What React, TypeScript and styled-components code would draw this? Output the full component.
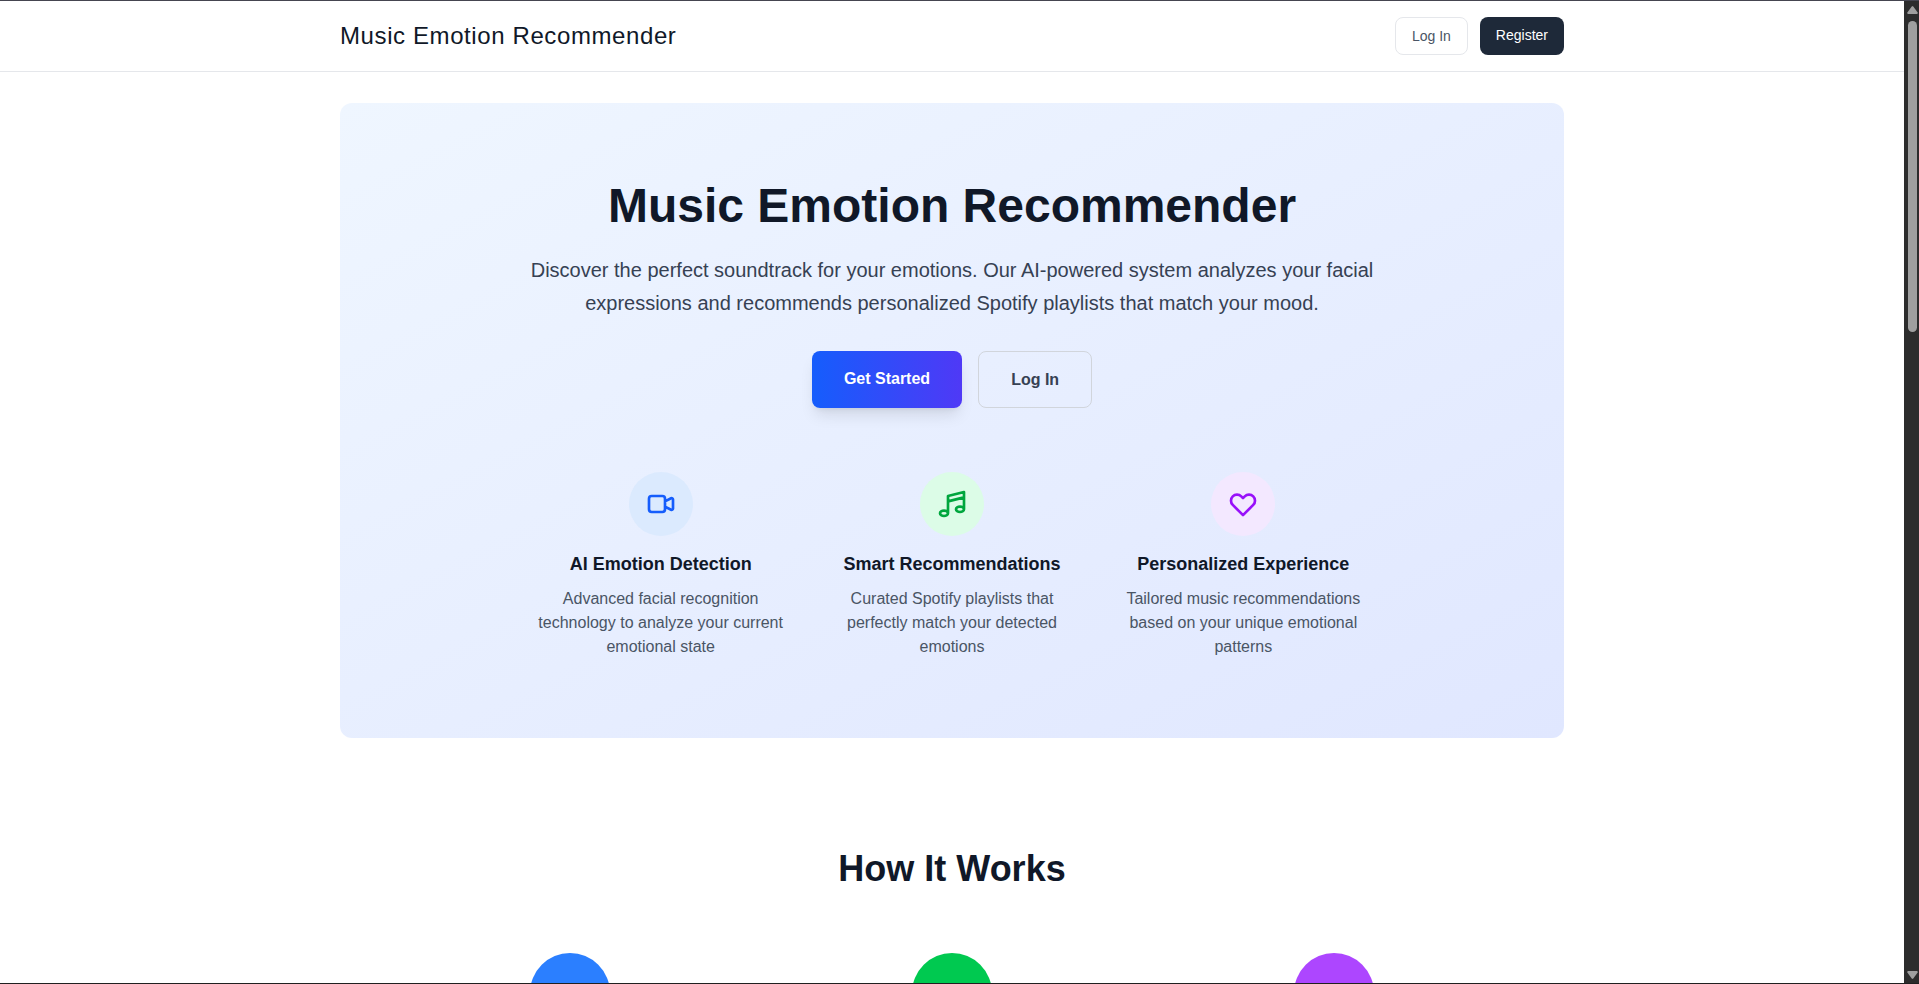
import React from "react";
import styled, { createGlobalStyle, css } from "styled-components";

const GlobalStyle = createGlobalStyle`
  *, *::before, *::after { box-sizing: border-box; }
  body {
    margin: 0;
    background: #ffffff;
    color: #101828;
    font-family: "Liberation Sans", Arial, sans-serif;
    font-size: 16px;
    line-height: 24px;
  }
  h1, h2, h3, p { margin: 0; }
  a { color: inherit; text-decoration: none; }
`;

const Window = styled.div`
  display: flex;
  height: 100vh;
  overflow: hidden;
  border-top: 1px solid #454550;
  border-bottom: 1px solid #202020;
`;

const Page = styled.div`
  flex: 1;
  min-width: 0;
  overflow: hidden;
`;

const Container = styled.div`
  max-width: 1280px;
  margin: 0 auto;
  padding: 0 28px;
`;

const Header = styled.header`
  border-bottom: 1px solid #e5e7eb;
  padding: 16px 0;
`;

const HeaderRow = styled(Container)`
  display: flex;
  align-items: center;
  justify-content: space-between;
`;

const Brand = styled.a`
  font-size: 24px;
  line-height: 32px;
  letter-spacing: 0.025em;
`;

const Nav = styled.nav`
  display: flex;
  gap: 12px;
`;

const NavLink = styled.a<{ $filled?: boolean }>`
  padding: 8px 16px;
  border-radius: 8px;
  font-size: 14px;
  line-height: 20px;
  ${({ $filled }) =>
    $filled
      ? css`
          background: #1e2939;
          color: #ffffff;
        `
      : css`
          border: 1px solid #e5e7eb;
          color: #4a5565;
        `}
`;

const Main = styled(Container).attrs({ as: "main" })`
  padding-top: 31px;
`;

const Hero = styled.section`
  display: flex;
  flex-direction: column;
  align-items: center;
  padding: 73px 32px 79px;
  border-radius: 12px;
  background: linear-gradient(to bottom right, #eff6ff, #e0e7ff);
  text-align: center;
`;

const HeroTitle = styled.h1`
  font-size: 48px;
  line-height: 60px;
  font-weight: 700;
`;

const HeroText = styled.p`
  max-width: 860px;
  margin-top: 18px;
  color: #364153;
  font-size: 20px;
  line-height: 33px;
`;

const Actions = styled.div`
  display: flex;
  gap: 16px;
  margin-top: 31px;
`;

const ActionLink = styled.a<{ $primary?: boolean }>`
  padding: 16px 32px;
  border-radius: 8px;
  line-height: 23px;
  font-weight: 600;
  ${({ $primary }) =>
    $primary
      ? css`
          background: linear-gradient(to right, #155dfc, #4f39f6);
          box-shadow: 0 10px 15px -3px rgba(0, 0, 0, 0.1),
            0 4px 6px -4px rgba(0, 0, 0, 0.1);
          color: #ffffff;
        `
      : css`
          border: 1px solid #d1d5dc;
          color: #364153;
        `}
`;

const Features = styled.div`
  display: grid;
  grid-template-columns: repeat(3, 1fr);
  gap: 32px;
  width: 100%;
  max-width: 842px;
  margin-top: 64px;
`;

const Feature = styled.article`
  display: flex;
  flex-direction: column;
  align-items: center;
`;

const FeatureIcon = styled.div<{ $tint: string; $color: string }>`
  display: flex;
  align-items: center;
  justify-content: center;
  width: 64px;
  height: 64px;
  border-radius: 50%;
  background: ${({ $tint }) => $tint};
  color: ${({ $color }) => $color};
`;

const Glyph = styled.svg`
  width: 32px;
  height: 32px;
  fill: none;
  stroke: currentColor;
  stroke-width: 2;
  stroke-linecap: round;
  stroke-linejoin: round;
`;

const FeatureTitle = styled.h3`
  margin-top: 14px;
  font-size: 18px;
  line-height: 28px;
  font-weight: 600;
`;

const FeatureText = styled.p`
  margin-top: 9px;
  color: #4a5565;
`;

const HowItWorks = styled.section`
  display: flex;
  flex-direction: column;
  align-items: center;
  padding-top: 111px;
`;

const SectionTitle = styled.h2`
  font-size: 36px;
  line-height: 40px;
  font-weight: 700;
`;

const Steps = styled.div`
  display: grid;
  grid-template-columns: repeat(3, 1fr);
  gap: 48px;
  justify-items: center;
  width: 100%;
  max-width: 1098px;
  margin-top: 64px;
`;

const StepBadge = styled.div<{ $color: string }>`
  width: 80px;
  height: 80px;
  border-radius: 50%;
  background: ${({ $color }) => $color};
`;

const ScrollTrack = styled.div`
  display: flex;
  flex-direction: column;
  align-items: center;
  justify-content: space-between;
  width: 15px;
  padding: 5px 0 4px 2px;
  background: #2c2c2c;
`;

const ScrollTop = styled.div`
  display: flex;
  flex-direction: column;
  align-items: center;
  gap: 7px;
  height: 33.5%;
`;

const ScrollThumb = styled.div`
  flex: 1;
  width: 9px;
  border-radius: 5px;
  background: #9f9f9f;
`;

const Arrow = styled.svg`
  display: block;
  flex: none;
  fill: #9f9f9f;
`;

const features = [
  {
    path: "M15 10l4.553-2.276A1 1 0 0121 8.618v6.764a1 1 0 01-1.447.894L15 14M5 18h8a2 2 0 002-2V8a2 2 0 00-2-2H5a2 2 0 00-2 2v8a2 2 0 002 2z",
    tint: "#dbeafe",
    color: "#155dfc",
    title: "AI Emotion Detection",
    text: "Advanced facial recognition technology to analyze your current emotional state",
  },
  {
    path: "M9 19V6l12-3v13M9 19c0 1.105-1.343 2-3 2s-3-.895-3-2 1.343-2 3-2 3 .895 3 2zm12-3c0 1.105-1.343 2-3 2s-3-.895-3-2 1.343-2 3-2 3 .895 3 2zM9 10l12-3",
    tint: "#dcfce7",
    color: "#00a63e",
    title: "Smart Recommendations",
    text: "Curated Spotify playlists that perfectly match your detected emotions",
  },
  {
    path: "M4.318 6.318a4.5 4.5 0 000 6.364L12 20.364l7.682-7.682a4.5 4.5 0 00-6.364-6.364L12 7.636l-1.318-1.318a4.5 4.5 0 00-6.364 0z",
    tint: "#f3e8ff",
    color: "#9810fa",
    title: "Personalized Experience",
    text: "Tailored music recommendations based on your unique emotional patterns",
  },
];

const stepColors = ["#2b7fff", "#00c950", "#ad46ff"];

export default function App() {
  return (
    <>
      <GlobalStyle />
      <Window>
        <Page>
          <Header>
            <HeaderRow>
              <Brand href="#">Music Emotion Recommender</Brand>
              <Nav>
                <NavLink href="#login">Log In</NavLink>
                <NavLink href="#register" $filled>
                  Register
                </NavLink>
              </Nav>
            </HeaderRow>
          </Header>
          <Main>
            <Hero>
              <HeroTitle>Music Emotion Recommender</HeroTitle>
              <HeroText>
                Discover the perfect soundtrack for your emotions. Our AI-powered
                system analyzes your facial expressions and recommends
                personalized Spotify playlists that match your mood.
              </HeroText>
              <Actions>
                <ActionLink href="#register" $primary>
                  Get Started
                </ActionLink>
                <ActionLink href="#login">Log In</ActionLink>
              </Actions>
              <Features>
                {features.map(({ path, tint, color, title, text }) => (
                  <Feature key={title}>
                    <FeatureIcon $tint={tint} $color={color}>
                      <Glyph viewBox="0 0 24 24" aria-hidden="true">
                        <path d={path} />
                      </Glyph>
                    </FeatureIcon>
                    <FeatureTitle>{title}</FeatureTitle>
                    <FeatureText>{text}</FeatureText>
                  </Feature>
                ))}
              </Features>
            </Hero>
            <HowItWorks>
              <SectionTitle>How It Works</SectionTitle>
              <Steps>
                {stepColors.map((color) => (
                  <StepBadge key={color} $color={color} />
                ))}
              </Steps>
            </HowItWorks>
          </Main>
        </Page>
        <ScrollTrack aria-hidden="true">
          <ScrollTop>
            <Arrow width="11" height="8" viewBox="0 0 11 8">
              <path d="M5.5 0 L6.5 0.8 L11 7 L10 8 H1 L0 7 L4.5 0.8 Z" />
            </Arrow>
            <ScrollThumb />
          </ScrollTop>
          <Arrow width="11" height="8" viewBox="0 0 11 8">
            <path d="M5.5 8 L6.5 7.2 L11 1 L10 0 H1 L0 1 L4.5 7.2 Z" />
          </Arrow>
        </ScrollTrack>
      </Window>
    </>
  );
}
